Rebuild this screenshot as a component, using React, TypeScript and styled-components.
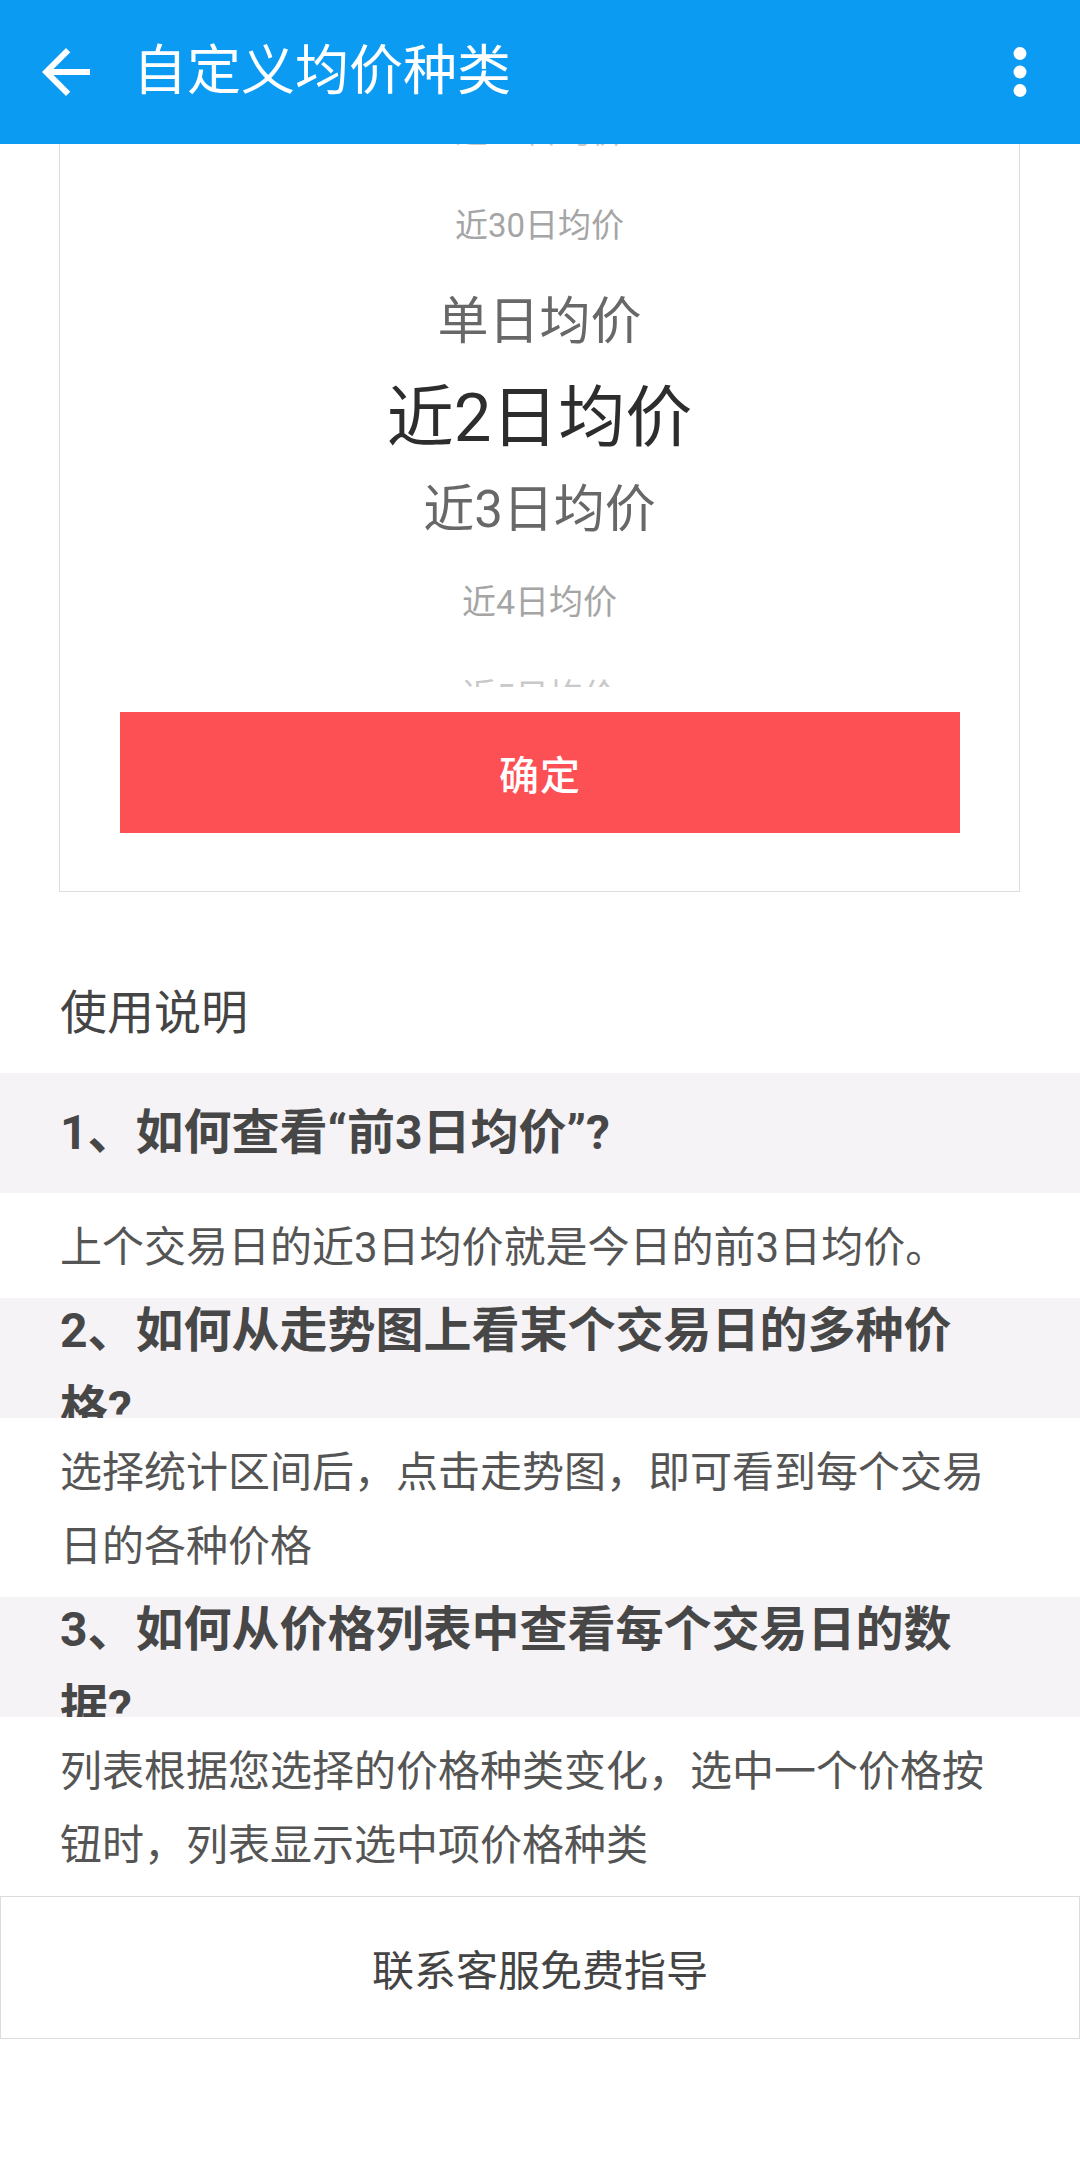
import React from 'react'
import styled, { createGlobalStyle } from 'styled-components'

const GlobalStyle = createGlobalStyle`
  html, body {
    margin: 0;
    padding: 0;
    background: #ffffff;
  }
  body {
    font-family: Roboto, "Noto Sans CJK SC", "Noto Sans", sans-serif;
    -webkit-font-smoothing: antialiased;
  }
  * {
    box-sizing: border-box;
  }
`

const Page = styled.div`
  width: 1080px;
  min-height: 2160px;
  background: #ffffff;
  display: flex;
  flex-direction: column;
`

const TopBar = styled.header`
  height: 144px;
  background: #0c9bf3;
  display: flex;
  align-items: center;
  padding: 0 23px 0 30px;
  color: #ffffff;
  flex-shrink: 0;
`

const IconButton = styled.div<{ size: number }>`
  width: ${(p) => p.size}px;
  height: ${(p) => p.size}px;
  display: flex;
  align-items: center;
  justify-content: center;
  flex-shrink: 0;
`

const Title = styled.h1`
  margin: 0 0 0 31px;
  flex: 1;
  font-size: 54px;
  font-weight: 400;
  line-height: 72px;
  color: #ffffff;
  white-space: nowrap;
`

const Card = styled.section`
  margin: 0 60px 0 59px;
  border: 1px solid #dedede;
  border-top: none;
  background: #ffffff;
  display: flex;
  flex-direction: column;
`

const Wheel = styled.div`
  height: 543px;
  overflow: hidden;
`

const WheelList = styled.ul`
  list-style: none;
  margin: -62px 0 0;
  padding: 0;
`

const WheelItem = styled.li<{ size: number; tone: string }>`
  height: 94px;
  display: flex;
  align-items: center;
  justify-content: center;
  font-size: ${(p) => p.size}px;
  color: ${(p) => p.tone};
  white-space: nowrap;
`

const ConfirmButton = styled.button`
  margin: 25px 59px 58px 60px;
  height: 121px;
  border: none;
  border-radius: 0;
  background: #fd5055;
  color: #ffffff;
  font-family: inherit;
  font-size: 40px;
  font-weight: 500;
  letter-spacing: 1px;
`

const SectionTitle = styled.h2`
  margin: 0;
  padding: 91px 60px 30px;
  font-size: 47px;
  font-weight: 400;
  line-height: 60px;
  color: #444444;
`

const QuestionBand = styled.div`
  height: 120px;
  overflow: hidden;
  background: #f5f3f6;
  padding: 0 60px;
  display: flex;
  flex-direction: column;
`

const QuestionBox = styled.div`
  margin: auto 0;
`

const QuestionText = styled.p`
  margin: -6px 0;
  max-width: 930px;
  font-size: 48px;
  font-weight: 700;
  line-height: 78px;
  color: #474747;
`

const Answer = styled.p`
  margin: 0;
  padding: 18px 60px 13px;
  font-size: 42px;
  font-weight: 400;
  line-height: 74px;
  color: #555555;
`

const HelpButton = styled.div`
  height: 143px;
  border: 1px solid #dcdcdc;
  display: flex;
  align-items: center;
  justify-content: center;
  font-size: 42px;
  color: #444444;
`

const wheelItems = [
  { label: '近20日均价', size: 33, tone: '#c9c9c9' },
  { label: '近30日均价', size: 33, tone: '#a5a5a5' },
  { label: '单日均价', size: 51, tone: '#686868' },
  { label: '近2日均价', size: 67, tone: '#2d2d2d' },
  { label: '近3日均价', size: 51, tone: '#686868' },
  { label: '近4日均价', size: 34, tone: '#a5a5a5' },
  { label: '近5日均价', size: 34, tone: '#c9c9c9' }
]

const faq = [
  {
    q: '1、如何查看“前3日均价”?',
    a: '上个交易日的近3日均价就是今日的前3日均价。'
  },
  {
    q: '2、如何从走势图上看某个交易日的多种价格?',
    a: '选择统计区间后，点击走势图，即可看到每个交易日的各种价格'
  },
  {
    q: '3、如何从价格列表中查看每个交易日的数据?',
    a: '列表根据您选择的价格种类变化，选中一个价格按钮时，列表显示选中项价格种类'
  }
]

const BackIcon = () => (
  <svg width="72" height="72" viewBox="0 0 24 24" fill="#ffffff">
    <path d="M20 11H7.83l5.59-5.59L12 4l-8 8 8 8 1.41-1.41L7.83 13H20v-2z" />
  </svg>
)

const MoreIcon = () => (
  <svg width="74" height="74" viewBox="0 0 24 24" fill="#ffffff">
    <circle cx="12" cy="6" r="2.1" />
    <circle cx="12" cy="12" r="2.1" />
    <circle cx="12" cy="18" r="2.1" />
  </svg>
)

export default function App() {
  return (
    <Page>
      <GlobalStyle />
      <TopBar>
        <IconButton size={72}>
          <BackIcon />
        </IconButton>
        <Title>自定义均价种类</Title>
        <IconButton size={74}>
          <MoreIcon />
        </IconButton>
      </TopBar>

      <Card>
        <Wheel>
          <WheelList>
            {wheelItems.map((item) => (
              <WheelItem key={item.label} size={item.size} tone={item.tone}>
                {item.label}
              </WheelItem>
            ))}
          </WheelList>
        </Wheel>
        <ConfirmButton>确定</ConfirmButton>
      </Card>

      <SectionTitle>使用说明</SectionTitle>

      {faq.map((item) => (
        <React.Fragment key={item.q}>
          <QuestionBand>
            <QuestionBox>
              <QuestionText>{item.q}</QuestionText>
            </QuestionBox>
          </QuestionBand>
          <Answer>{item.a}</Answer>
        </React.Fragment>
      ))}

      <HelpButton>联系客服免费指导</HelpButton>
    </Page>
  )
}
